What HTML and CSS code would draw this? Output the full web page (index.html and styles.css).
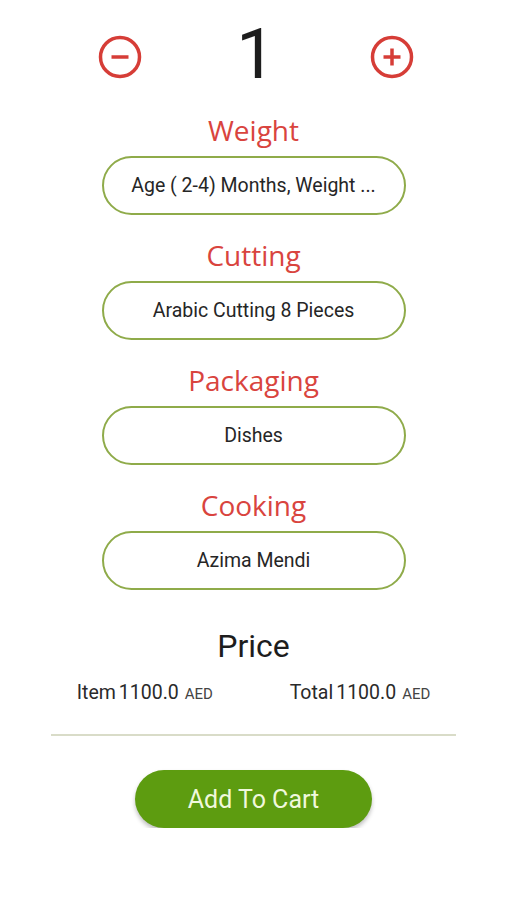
FILE: index.html
```html
<!DOCTYPE html>
<html lang="en">
<head>
<meta charset="utf-8">
<title>Product options</title>
<link rel="stylesheet" href="styles.css">
</head>
<body>
<main class="page">
  <div class="counter">
    <button class="round-icon" aria-label="decrease">
      <svg viewBox="0 0 44 44" width="44" height="44"><circle cx="22" cy="22" r="19.5" fill="none" stroke="#d63d37" stroke-width="3.5"/><line x1="13.5" y1="22" x2="30.5" y2="22" stroke="#d63d37" stroke-width="3.5"/></svg>
    </button>
    <span class="qty">1</span>
    <button class="round-icon" aria-label="increase">
      <svg viewBox="0 0 44 44" width="44" height="44"><circle cx="22" cy="22" r="19.5" fill="none" stroke="#d63d37" stroke-width="3.5"/><line x1="13.5" y1="22" x2="30.5" y2="22" stroke="#d63d37" stroke-width="3.5"/><line x1="22" y1="13.5" x2="22" y2="30.5" stroke="#d63d37" stroke-width="3.5"/></svg>
    </button>
  </div>

  <section class="option">
    <h2 class="option-label">Weight</h2>
    <div class="option-box">Age ( 2-4) Months, Weight ...</div>
  </section>
  <section class="option">
    <h2 class="option-label">Cutting</h2>
    <div class="option-box">Arabic Cutting 8 Pieces</div>
  </section>
  <section class="option">
    <h2 class="option-label">Packaging</h2>
    <div class="option-box">Dishes</div>
  </section>
  <section class="option">
    <h2 class="option-label">Cooking</h2>
    <div class="option-box">Azima Mendi</div>
  </section>

  <h3 class="price-title">Price</h3>
  <div class="price-row">
    <div class="price-item"><span class="price-name">Item</span><span class="price-val">1100.0</span><span class="cur">AED</span></div>
    <div class="price-item"><span class="price-name">Total</span><span class="price-val">1100.0</span><span class="cur">AED</span></div>
  </div>
  <hr class="divider">
  <div class="cart-wrap">
    <button class="cart-btn">Add To Cart</button>
  </div>
</main>
</body>
</html>
```
FILE: styles.css
```css
* { box-sizing: border-box; }
html, body { margin: 0; padding: 0; background: #ffffff; }
body { font-family: Roboto, "Liberation Sans", sans-serif; color: #222; }
.page { width: 507px; margin: 0 auto; }

.counter {
  height: 110px;
  padding: 4px 93px 0 98px;
  display: flex;
  align-items: center;
  justify-content: space-between;
}
.round-icon {
  border: 0; background: none; padding: 0; width: 44px; height: 44px;
  display: flex; align-items: center; justify-content: center;
}
.qty {
  font-size: 70px; line-height: 1; font-weight: 400; color: #1d1d1d;
  transform: translateY(-3px);
}

.option { display: flex; flex-direction: column; align-items: center; margin-bottom: 20px; }
.option-label {
  margin: 0; height: 40px; line-height: 40px;
  font-family: "Open Sans", Lato, sans-serif; font-weight: 500;
  font-size: 28px; color: #d9443e; letter-spacing: 0;
}
.option-box {
  margin-top: 6px;
  width: 304px; height: 59px;
  border: 2px solid #8fab4a; border-radius: 30px;
  display: flex; align-items: center; justify-content: center;
  font-size: 19.5px; color: #262626;
}

.price-title {
  margin: 32px 0 0; text-align: center; font-weight: 400;
  font-size: 32px; line-height: 48px; color: #1d1d1d;
}
.price-row {
  display: flex; justify-content: space-evenly; align-items: baseline;
  margin-top: 11px; height: 24px;
}
.price-item { display: flex; align-items: baseline; font-size: 19.5px; color: #2a2a2a; }
.price-val { margin-left: 3px; }
.cur { font-size: 15px; margin-left: 6px; color: #444; }

.divider {
  margin: 29px 51px 0; border: 0; height: 2px; background: #d9dcc8;
}
.cart-wrap { display: flex; justify-content: center; margin-top: 34px; }
.cart-btn {
  width: 237px; height: 58px; border: 0; border-radius: 29px;
  background: #5d9c10; color: #f0f8dc;
  font-family: Roboto, "Liberation Sans", sans-serif; font-size: 25px;
  box-shadow: 0 3px 4px rgba(0,0,0,0.25);
}
```
